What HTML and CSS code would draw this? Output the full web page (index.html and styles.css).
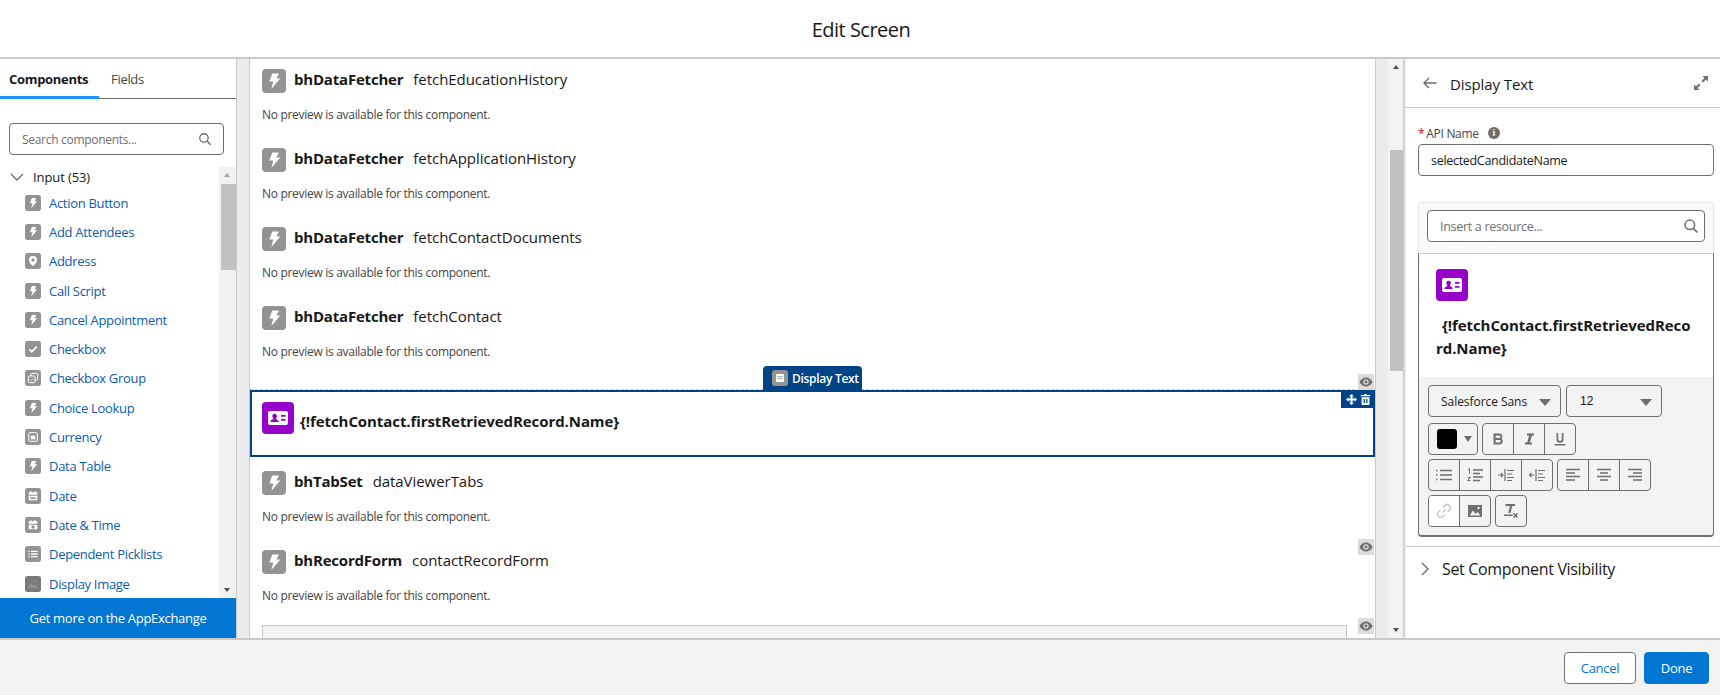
FILE: index.html
```html
<!DOCTYPE html>
<html lang="en">
<head>
<meta charset="utf-8">
<title>Edit Screen</title>
<link rel="stylesheet" href="styles.css">
</head>
<body>
<svg class="defs" width="0" height="0" aria-hidden="true">
  <defs>
    <symbol id="i-bolt" viewBox="0 0 24 24"><rect width="24" height="24" rx="4" fill="#939393"/><path d="M10.300 4.500h6.700l-2.700 5h4l-9 10.500 2-7.500H7.300z" fill="#fff"/></symbol>
    <symbol id="i-pin" viewBox="0 0 24 24"><rect width="24" height="24" rx="4" fill="#939393"/><path fill-rule="evenodd" d="M12 4.500a6 6 0 0 1 6 6c0 3.600-4 7.600-5.300 8.800a1 1 0 0 1-1.400 0C10 18.100 6 14.100 6 10.500a6 6 0 0 1 6-6zm0 3.500a2.500 2.500 0 1 0 0 5 2.500 2.500 0 0 0 0-5z" fill="#fff"/></symbol>
    <symbol id="i-check" viewBox="0 0 24 24"><rect width="24" height="24" rx="4" fill="#939393"/><path d="M6.500 12.500l3.800 3.800 7.200-7.800" fill="none" stroke="#fff" stroke-width="2.400"/></symbol>
    <symbol id="i-group" viewBox="0 0 24 24"><rect width="24" height="24" rx="4" fill="#939393"/><rect x="9" y="5" width="10" height="10" rx="1.500" fill="none" stroke="#fff" stroke-width="1.500"/><rect x="5" y="9" width="10" height="10" rx="1.500" fill="#939393" stroke="#fff" stroke-width="1.500"/><path d="M7.500 14l1.800 1.800 3.200-3.400" fill="none" stroke="#fff"/></symbol>
    <symbol id="i-currency" viewBox="0 0 24 24"><rect width="24" height="24" rx="4" fill="#939393"/><rect x="5.500" y="5.500" width="13" height="13" rx="1.500" fill="none" stroke="#fff" stroke-width="1.500"/><rect x="8.500" y="10" width="7" height="5.500" fill="#fff"/></symbol>
    <symbol id="i-date" viewBox="0 0 24 24"><rect width="24" height="24" rx="4" fill="#939393"/><path d="M5.500 7.500a1 1 0 0 1 1-1h11a1 1 0 0 1 1 1V10h-13z" fill="#fff"/><path d="M5.500 11.500h13v6a1 1 0 0 1-1 1h-11a1 1 0 0 1-1-1z" fill="#fff"/><rect x="8" y="14" width="8" height="2.500" fill="#939393"/><rect x="8" y="4.500" width="1.500" height="3" fill="#fff"/><rect x="14.500" y="4.500" width="1.500" height="3" fill="#fff"/></symbol>
    <symbol id="i-datetime" viewBox="0 0 24 24"><rect width="24" height="24" rx="4" fill="#939393"/><path d="M5.500 7.500a1 1 0 0 1 1-1h11a1 1 0 0 1 1 1V10h-13z" fill="#fff"/><path d="M5.500 11.500h13v6a1 1 0 0 1-1 1h-11a1 1 0 0 1-1-1z" fill="#fff"/><circle cx="12" cy="15" r="2.500" fill="#939393"/><rect x="8" y="4.500" width="1.500" height="3" fill="#fff"/><rect x="14.500" y="4.500" width="1.500" height="3" fill="#fff"/></symbol>
    <symbol id="i-list" viewBox="0 0 24 24"><rect width="24" height="24" rx="4" fill="#939393"/><path d="M5 8h2m2 0h10M5 12h2m2 0h10M5 16h2m2 0h10" fill="none" stroke="#fff" stroke-width="2"/></symbol>
    <symbol id="i-image" viewBox="0 0 24 24"><rect width="24" height="24" rx="4" fill="#7a7a7a"/><path d="M4 18l5-7 3.500 4 2.500-2.500 5 5.500z" fill="#939393"/><circle cx="16" cy="8" r="1.500" fill="#939393"/></symbol>
    <symbol id="i-text" viewBox="0 0 24 24"><rect width="24" height="24" rx="5" fill="#939393"/><rect x="6" y="6" width="12" height="12" rx="1.500" fill="#fff"/><path d="M8 10h8M8 13h8" stroke="#939393" stroke-width="1.300"/></symbol>
    <symbol id="i-contact" viewBox="0 0 32 32"><rect width="32" height="32" rx="4" fill="#9602c7"/><path fill-rule="evenodd" d="M8 9h16a2 2 0 0 1 2 2v10a2 2 0 0 1-2 2H8a2 2 0 0 1-2-2V11a2 2 0 0 1 2-2zm4.500 2.800a2.300 2.300 0 0 0-1.600 3.900c.6.700.5 1.500-.4 1.900-1 .4-1.900.9-1.900 1.600v.8h8v-.8c0-.7-.9-1.200-1.900-1.600-.9-.4-1-1.200-.4-1.900a2.300 2.300 0 0 0-1.800-3.900zm6.500 1.200v1.700h4.500V13zm0 4v1.700h4.500V17z" fill="#fff"/></symbol>
    <symbol id="i-search" viewBox="0 0 16 16"><circle cx="6.800" cy="6.800" r="4.800" fill="none" stroke="#706e6b" stroke-width="1.500"/><path d="M10.300 10.300l4.200 4.200" stroke="#706e6b" stroke-width="1.700"/></symbol>
    <symbol id="i-eye" viewBox="0 0 16 16"><rect width="16" height="16" fill="#dcdcdc"/><path fill-rule="evenodd" d="M8 3.500c3.300 0 5.600 2.500 6.500 4.500-.9 2-3.200 4.500-6.500 4.500S2.400 10 1.500 8C2.400 6 4.700 3.500 8 3.500zm0 1.800a2.700 2.700 0 1 0 0 5.400 2.700 2.700 0 0 0 0-5.400zm0 1.300a1.400 1.400 0 1 1 0 2.800 1.400 1.400 0 0 1 0-2.800z" fill="#706e6b"/></symbol>
  </defs>
</svg>

<header class="top">Edit Screen</header>

<main class="main">
  <aside class="left">
    <nav class="tabs">
      <span class="tab tab-on">Components</span>
      <span class="tab">Fields</span>
    </nav>
    <div class="search">
      <span class="search-ph">Search components...</span>
      <svg class="search-ic"><use href="#i-search"/></svg>
    </div>
    <div class="list-wrap">
      <div class="list">
        <div class="list-head">
          <svg class="chev" viewBox="0 0 14 8"><path d="M1 1l6 6 6-6" fill="none" stroke="#706e6b" stroke-width="1.400"/></svg>
          <span>Input (53)</span>
        </div>
        <a class="row"><svg class="row-ic"><use href="#i-bolt"/></svg>Action Button</a>
        <a class="row"><svg class="row-ic"><use href="#i-bolt"/></svg>Add Attendees</a>
        <a class="row"><svg class="row-ic"><use href="#i-pin"/></svg>Address</a>
        <a class="row"><svg class="row-ic"><use href="#i-bolt"/></svg>Call Script</a>
        <a class="row"><svg class="row-ic"><use href="#i-bolt"/></svg>Cancel Appointment</a>
        <a class="row"><svg class="row-ic"><use href="#i-check"/></svg>Checkbox</a>
        <a class="row"><svg class="row-ic"><use href="#i-group"/></svg>Checkbox Group</a>
        <a class="row"><svg class="row-ic"><use href="#i-bolt"/></svg>Choice Lookup</a>
        <a class="row"><svg class="row-ic"><use href="#i-currency"/></svg>Currency</a>
        <a class="row"><svg class="row-ic"><use href="#i-bolt"/></svg>Data Table</a>
        <a class="row"><svg class="row-ic"><use href="#i-date"/></svg>Date</a>
        <a class="row"><svg class="row-ic"><use href="#i-datetime"/></svg>Date &amp; Time</a>
        <a class="row"><svg class="row-ic"><use href="#i-list"/></svg>Dependent Picklists</a>
        <a class="row"><svg class="row-ic"><use href="#i-image"/></svg>Display Image</a>
      </div>
      <div class="sbar sbar-list">
        <i class="arrow-up"></i>
        <i class="thumb thumb-list"></i>
        <i class="arrow-down"></i>
      </div>
    </div>
    <div class="appx">Get more on the AppExchange</div>
  </aside>

  <div class="gutter"></div>

  <section class="canvas">
    <div class="item">
      <div class="item-title"><svg class="item-ic"><use href="#i-bolt"/></svg><b>bhDataFetcher</b><span>fetchEducationHistory</span></div>
      <p class="nopreview">No preview is available for this component.</p>
    </div>
    <div class="item">
      <div class="item-title"><svg class="item-ic"><use href="#i-bolt"/></svg><b>bhDataFetcher</b><span>fetchApplicationHistory</span></div>
      <p class="nopreview">No preview is available for this component.</p>
    </div>
    <div class="item">
      <div class="item-title"><svg class="item-ic"><use href="#i-bolt"/></svg><b>bhDataFetcher</b><span>fetchContactDocuments</span></div>
      <p class="nopreview">No preview is available for this component.</p>
    </div>
    <div class="item">
      <div class="item-title"><svg class="item-ic"><use href="#i-bolt"/></svg><b>bhDataFetcher</b><span>fetchContact</span></div>
      <p class="nopreview">No preview is available for this component.</p>
    </div>
    <div class="selected">
      <div class="badge"><svg class="badge-ic"><use href="#i-text"/></svg>Display Text</div>
      <svg class="eye eye-sel"><use href="#i-eye"/></svg>
      <div class="sel-tools">
        <svg class="tool-ic" viewBox="0 0 14 14"><path d="M7 0l3 3H8.300v2.700H11V4l3 3-3 3V8.300H8.300V11H10l-3 3-3-3h1.700V8.300H3V10L0 7l3-3v1.700h2.700V3H4z" fill="#fff"/></svg>
        <svg class="tool-ic" viewBox="0 0 14 14"><path d="M5.500 0h3v1.200H13v1.800H1V1.200h4.500zM2 4h10v9a1 1 0 0 1-1 1H3a1 1 0 0 1-1-1zm2.500 2.500v5h1.700v-5zm3.300 0v5h1.700v-5z" fill="#fff"/></svg>
      </div>
      <svg class="sel-ic"><use href="#i-contact"/></svg>
      <b class="sel-text">{!fetchContact.firstRetrievedRecord.Name}</b>
    </div>
    <div class="item item-after">
      <div class="item-title"><svg class="item-ic"><use href="#i-bolt"/></svg><b>bhTabSet</b><span>dataViewerTabs</span></div>
      <p class="nopreview">No preview is available for this component.</p>
    </div>
    <div class="item">
      <svg class="eye eye-item"><use href="#i-eye"/></svg>
      <div class="item-title"><svg class="item-ic"><use href="#i-bolt"/></svg><b>bhRecordForm</b><span>contactRecordForm</span></div>
      <p class="nopreview">No preview is available for this component.</p>
    </div>
    <div class="form-box">
      <svg class="eye eye-box"><use href="#i-eye"/></svg>
    </div>
  </section>

  <div class="sbar-wrap">
    <div class="gutter2"></div>
    <div class="sbar sbar-canvas">
      <i class="arrow-up"></i>
      <i class="thumb thumb-canvas"></i>
      <i class="arrow-down"></i>
    </div>
  </div>

  <aside class="right">
    <div class="right-head">
      <svg class="back" viewBox="0 0 14 12"><path d="M13.500 6H1.500M6 1L1 6l5 5" fill="none" stroke="#706e6b" stroke-width="1.400"/></svg>
      <span class="right-title">Display Text</span>
      <svg class="expand" viewBox="0 0 14 14"><path d="M8.500 0H14v5.500l-2-2-3 3-1.500-1.500 3-3zM5.500 14H0V8.500l2 2 3-3L6.500 9l-3 3z" fill="#706e6b"/></svg>
    </div>
    <div class="right-body">
      <label class="api-label"><span class="req">*</span>API Name<i class="info">i</i></label>
      <div class="input">selectedCandidateName</div>
      <div class="editor">
        <div class="editor-top">
          <div class="res-search">
            <span class="res-ph">Insert a resource...</span>
            <svg class="search-ic"><use href="#i-search"/></svg>
          </div>
        </div>
        <div class="editor-content">
          <svg class="sel-ic sel-ic-ed"><use href="#i-contact"/></svg>
          <p class="ed-text"><span class="ed-lead"></span><b>{!fetchContact.firstRetrievedRecord.Name}</b></p>
        </div>
        <div class="toolbar">
          <div class="tb-row">
            <div class="select sel-font">Salesforce Sans<i class="caret"></i></div>
            <div class="select sel-size">12<i class="caret"></i></div>
          </div>
          <div class="tb-row tb-row-2">
            <div class="btn color"><i class="swatch"></i><i class="caret caret-sm"></i></div>
            <div class="grp">
              <span class="btn-g"><svg class="tb-ic" viewBox="0 0 14 14"><path fill-rule="evenodd" d="M2.500 1.500h6a3 3 0 0 1 2 5.200 3.200 3.200 0 0 1-1.800 5.800H2.500zM4.600 3.500v2.600h3.700a1.300 1.300 0 0 0 0-2.600zm0 4.500v2.500h3.900a1.250 1.250 0 0 0 0-2.500z" fill="#706e6b"/></svg></span>
              <span class="btn-g"><svg class="tb-ic" viewBox="0 0 14 14"><path d="M5 1.500h7v1.900H9.900L7.900 10.600h2.100v1.900H3v-1.900h2.200l2-7.200H5z" fill="#706e6b"/></svg></span>
              <span class="btn-g"><svg class="tb-ic" viewBox="0 0 14 14"><path d="M3.500 1h1.700v6.300a1.800 1.800 0 0 0 3.600 0V1h1.700v6.300a3.500 3.500 0 0 1-7 0zM1.500 12h11v1.500h-11z" fill="#706e6b"/></svg></span>
            </div>
          </div>
          <div class="tb-row">
            <div class="grp">
              <span class="btn-g"><svg class="tb-ic tb-ic-w" viewBox="0 0 16 14"><path d="M0 2.500h1.500M4 2.500h12M0 7h1.500M4 7h12M0 11.500h1.500M4 11.500h12" stroke="#706e6b" stroke-width="1.500"/></svg></span>
              <span class="btn-g"><svg class="tb-ic tb-ic-w" viewBox="0 0 16 14"><path d="M6 2h10M6 5.500h7M6 9h10M6 12.500h7" stroke="#706e6b" stroke-width="1.400"/><path d="M1 1.500l1.500-.8V6M.5 9.500h3l-3 3h3" fill="none" stroke="#706e6b"/></svg></span>
              <span class="btn-g"><svg class="tb-ic tb-ic-w" viewBox="0 0 16 14"><path d="M0 7h4.500M3 5l2 2-2 2M7 1v12" fill="none" stroke="#706e6b" stroke-width="1.200"/><path d="M9 2.500h7M9 6h5M9 9.500h7M9 12.500h5" stroke="#706e6b" stroke-width="1.200"/></svg></span>
              <span class="btn-g"><svg class="tb-ic tb-ic-w" viewBox="0 0 16 14"><path d="M5 7H.5M2.500 5l-2 2 2 2M7 1v12" fill="none" stroke="#706e6b" stroke-width="1.200"/><path d="M9 2.500h7M9 6h5M9 9.500h7M9 12.500h5" stroke="#706e6b" stroke-width="1.200"/></svg></span>
            </div>
            <div class="grp">
              <span class="btn-g"><svg class="tb-ic" viewBox="0 0 14 14"><path d="M0 1.500h14M0 5h9M0 8.500h14M0 12h9" stroke="#706e6b" stroke-width="1.500"/></svg></span>
              <span class="btn-g"><svg class="tb-ic" viewBox="0 0 14 14"><path d="M0 1.500h14M3 5h8M0 8.500h14M3 12h8" stroke="#706e6b" stroke-width="1.500"/></svg></span>
              <span class="btn-g"><svg class="tb-ic" viewBox="0 0 14 14"><path d="M0 1.500h14M5 5h9M0 8.500h14M5 12h9" stroke="#706e6b" stroke-width="1.500"/></svg></span>
            </div>
          </div>
          <div class="tb-row">
            <div class="grp">
              <span class="btn-g btn-off"><svg class="tb-ic tb-ic-lg" viewBox="0 0 16 16"><path d="M6.500 9.500l3-3M7 4.500l2-2a3 3 0 0 1 4.500 4.500l-2 2M9 11.500l-2 2A3 3 0 0 1 2.500 9l2-2" fill="none" stroke="#c9c9c9" stroke-width="1.500"/></svg></span>
              <span class="btn-g"><svg class="tb-ic tb-ic-lg" viewBox="0 0 16 16"><path fill-rule="evenodd" d="M1 2h14v12H1zm10.500 1.800a1.200 1.200 0 1 0 0 2.400 1.200 1.200 0 0 0 0-2.400zM2.500 12.500h11l-3-3.500-2 2-2.500-3.500z" fill="#706e6b"/></svg></span>
            </div>
            <div class="grp">
              <span class="btn-g"><svg class="tb-ic tb-ic-lg" viewBox="0 0 16 16"><path d="M2.500 1h9.500v2H9.200L7.500 10H5.300L7 3H2.500zM1 11.500h8.500v1.500H1z" fill="#706e6b"/><path d="M10.500 10.500l4 4M14.500 10.500l-4 4" stroke="#706e6b" stroke-width="1.600"/></svg></span>
            </div>
          </div>
        </div>
      </div>
    </div>
    <div class="section">
      <svg class="sec-chev" viewBox="0 0 8 14"><path d="M1 1l6 6-6 6" fill="none" stroke="#706e6b" stroke-width="1.400"/></svg>
      <span>Set Component Visibility</span>
    </div>
  </aside>
</main>

<footer class="foot">
  <button class="btn-cancel">Cancel</button>
  <button class="btn-done">Done</button>
</footer>
</body>
</html>
```

FILE: styles.css
```css
* { box-sizing: border-box; }
html, body { margin: 0; padding: 0; }
body {
  width: 1720px;
  height: 695px;
  overflow: hidden;
  display: flex;
  flex-direction: column;
  font-family: "Open Sans", "Noto Sans", sans-serif;
  font-size: 12px;
  letter-spacing: -0.3px;
  color: #181818;
  background: #fff;
}
.defs { position: absolute; }
svg { display: block; flex: none; }

.top {
  height: 59px;
  flex: none;
  border-bottom: 2px solid #c9c9c9;
  display: flex;
  align-items: center;
  justify-content: center;
  padding: 2px 0 0 2px;
  font-size: 20px;
  letter-spacing: -0.5px;
}

.main { flex: 1; display: flex; min-height: 0; }

/* left */
.left {
  width: 237px;
  flex: none;
  border-right: 1px solid #c9c9c9;
  display: flex;
  flex-direction: column;
}
.tabs {
  height: 40px;
  flex: none;
  display: flex;
  border-bottom: 1px solid #706e6b;
  font-size: 13px;
}
.tab { padding: 11px 8px 0 12px; color: #444; line-height: 18px; }
.tab-on {
  width: 99px;
  padding-left: 9px;
  font-weight: 700;
  color: #181818;
  border-bottom: 3px solid #1b96ff;
  height: 40px;
}
.search {
  margin: 24px 12px 0 9px;
  height: 32px;
  flex: none;
  border: 1px solid #706e6b;
  border-radius: 4px;
  display: flex;
  align-items: center;
  justify-content: space-between;
  padding: 0 11px 0 12px;
}
.search-ph { color: #706e6b; }
.search-ic { width: 14px; height: 14px; }
.list-wrap { flex: 1; display: flex; margin-top: 12px; min-height: 0; }
.list { flex: 1; min-width: 0; overflow: hidden; }
.list-head {
  height: 19px;
  margin-bottom: 2px;
  display: flex;
  align-items: center;
  gap: 9px;
  padding-left: 10px;
  font-size: 13px;
  letter-spacing: -0.1px;
  color: #181818;
}
.chev { width: 14px; height: 8px; }
.row {
  height: 29.3px;
  display: flex;
  align-items: center;
  gap: 8px;
  padding-left: 25px;
  font-size: 13px;
  color: #0b5cab;
}
.row-ic { width: 16px; height: 16px; }
.appx {
  height: 40px;
  flex: none;
  background: #0176d3;
  color: #fff;
  font-size: 13px;
  display: flex;
  align-items: center;
  justify-content: center;
}

/* scrollbars */
.sbar { position: relative; background: #f1f1f1; flex: none; display: flex; flex-direction: column; }
.sbar-list { width: 17px; }
.thumb { display: block; background: #c1c1c1; }
.thumb-list { height: 86px; margin-left: 2px; }
.thumb-canvas { height: 221px; margin: 74px 0 0 2px; }
.arrow-up, .arrow-down {
  display: block;
  width: 0;
  height: 0;
  border-left: 3.500px solid transparent;
  border-right: 3.500px solid transparent;
  margin-left: 5px;
}
.arrow-up { border-bottom: 4px solid #505050; margin-top: 6px; margin-bottom: 7px; }
.sbar-list .arrow-up { border-bottom-color: #a3a3a3; }
.arrow-down { border-top: 4px solid #505050; position: absolute; bottom: 6px; left: 0; }

.gutter {
  width: 13px;
  flex: none;
  background: #ebebeb;
  border-right: 1px solid #c9c9c9;
}

/* canvas */
.canvas {
  width: 1125px;
  flex: none;
  position: relative;
  overflow: hidden;
  background: #fff;
}
.item { height: 79px; padding: 10px 12px 0; position: relative; }
.item-after { margin-top: 4px; }
.item-title {
  display: flex;
  align-items: flex-start;
  height: 24px;
  font-size: 15px;
  line-height: 20px;
}
.item-ic { width: 24px; height: 24px; margin-right: 8px; }
.item-title b { margin-right: 10px; letter-spacing: -0.2px; }
.item-title span { letter-spacing: -0.05px; }
.nopreview { margin: 14px 0 0; color: #444; font-size: 12px; line-height: 16px; }
.selected {
  position: relative;
  height: 67px;
  margin-top: 15px;
  border: 2px solid #014486;
  display: flex;
  align-items: flex-start;
  padding: 10px;
}
.selected::before {
  content: "";
  position: absolute;
  left: -2px;
  right: -2px;
  top: -3px;
  border-top: 1px dashed #c9c9c9;
}
.sel-ic { width: 32px; height: 32px; }
.sel-text { margin: 7px 0 0 6px; font-size: 15px; letter-spacing: -0.08px; line-height: 24px; }
.badge {
  position: absolute;
  top: -26px;
  left: 511px;
  width: 99px;
  height: 24px;
  background: #014486;
  border-radius: 4px 4px 0 0;
  color: #fff;
  font-weight: 600;
  display: flex;
  align-items: center;
  gap: 4px;
  padding-left: 9px;
}
.badge-ic { width: 16px; height: 16px; }
.eye { position: absolute; width: 16px; height: 16px; }
.eye-sel { right: -1px; top: -18px; }
.eye-item { right: 1px; top: -1px; }
.eye-box { right: -28px; top: -8px; }
.sel-tools {
  position: absolute;
  right: -2px;
  top: -2px;
  width: 34px;
  height: 18px;
  background: #014486;
  display: flex;
  align-items: center;
  justify-content: center;
  gap: 3px;
}
.tool-ic { width: 11px; height: 11px; }
.form-box {
  position: relative;
  height: 40px;
  margin: 6px 0 0 12px;
  width: 1085px;
  background: #f3f3f3;
  border: 1px solid #c9c9c9;
}

/* canvas scroll */
.sbar-wrap { width: 31px; flex: none; display: flex; }
.gutter2 {
  width: 13px;
  background: #ebebeb;
  border-left: 1px solid #c9c9c9;
}
.sbar-canvas {
  width: 15px;
  background: #f3f3f3;
  box-shadow: 2px 0 2px #c9c9c9;
}

/* right */
.right { flex: 1; min-width: 0; display: flex; flex-direction: column; background: #fff; position: relative; }
.right-head {
  height: 49px;
  flex: none;
  display: flex;
  align-items: center;
  padding: 0 12px 0 17px;
  border-bottom: 1px solid #c9c9c9;
}
.back { width: 14px; height: 12px; margin-right: 13px; }
.right-title { flex: 1; padding-top: 2px; font-size: 15px; letter-spacing: -0.1px; }
.expand { width: 14px; height: 14px; }
.right-body { padding: 16px 6px 0 12px; }
.api-label { display: flex; align-items: center; height: 18px; color: #444; }
.req { color: #ea001e; margin-right: 2px; }
.info {
  width: 12px;
  height: 12px;
  margin-left: 9px;
  border-radius: 50%;
  background: #706e6b;
  color: #fff;
  font-size: 9px;
  font-weight: 700;
  font-style: normal;
  line-height: 12px;
  text-align: center;
}
.input {
  height: 32px;
  margin-top: 2px;
  border: 1px solid #706e6b;
  border-radius: 4px;
  display: flex;
  align-items: center;
  padding-left: 12px;
  font-size: 12.500px;
}
.editor { margin-top: 26px; }
.editor-top {
  height: 51px;
  background: #fafaf9;
  border: 1px solid #e5e5e5;
  border-bottom: 0;
  border-radius: 4px 4px 0 0;
  padding: 7px 8px 0;
}
.res-search {
  height: 32px;
  border: 1px solid #706e6b;
  border-radius: 4px;
  background: #fff;
  display: flex;
  align-items: center;
  justify-content: space-between;
  padding: 0 5px 0 12px;
}
.res-ph { color: #706e6b; font-size: 12.500px; }
.res-search .search-ic { width: 16px; height: 16px; }
.editor-content {
  height: 124px;
  border: 1px solid #706e6b;
  border-top-color: #c9c9c9;
  border-bottom: 0;
  padding: 15px 17px 0 17px;
}
.sel-ic-ed { width: 32px; height: 32px; }
.ed-text {
  margin: 13px 0 0;
  font-size: 15px;
  letter-spacing: -0.08px;
  line-height: 23px;
  word-break: break-all;
}
.ed-lead { display: inline-block; width: 6px; }
.toolbar {
  height: 160px;
  background: #f3f3f3;
  border: 1px solid #706e6b;
  border-top: 0;
  border-bottom-width: 2px;
  border-radius: 0 0 4px 4px;
  padding: 8px 9px 0;
  display: flex;
  flex-direction: column;
  gap: 4px;
}
.tb-row { display: flex; gap: 4px; height: 32px; flex: none; }
.tb-row-2 { margin-top: 2px; }
.select {
  position: relative;
  height: 32px;
  background: #f3f3f3;
  border: 1px solid #706e6b;
  border-radius: 4px;
  display: flex;
  align-items: center;
  color: #181818;
  letter-spacing: -0.05px;
  padding-left: 12px;
}
.sel-font { width: 133px; }
.sel-size { width: 96px; margin-left: 1px; font-family: "Liberation Sans", sans-serif; letter-spacing: 0; padding-left: 13px; }
.caret {
  position: absolute;
  right: 9px;
  top: 13px;
  width: 0;
  height: 0;
  border-left: 6px solid transparent;
  border-right: 6px solid transparent;
  border-top: 7px solid #706e6b;
}
.btn {
  position: relative;
  height: 32px;
  width: 50px;
  border: 1px solid #706e6b;
  border-radius: 4px;
}
.swatch {
  position: absolute;
  left: 8px;
  top: 5px;
  width: 20px;
  height: 20px;
  border-radius: 3px;
  background: #000;
}
.caret-sm {
  right: 5px;
  top: 12px;
  border-left-width: 4.500px;
  border-right-width: 4.500px;
  border-top-width: 6px;
}
.grp {
  display: flex;
  height: 32px;
  border: 1px solid #706e6b;
  border-radius: 4px;
}
.btn-g {
  width: 30px;
  height: 30px;
  display: flex;
  align-items: center;
  justify-content: center;
}
.btn-g + .btn-g { width: 31px; border-left: 1px solid #706e6b; }
.btn-off {
  background: #fff;
  border-radius: 3px 0 0 3px;
}
.tb-ic { width: 14px; height: 14px; }
.tb-ic-w { width: 16px; height: 14px; }
.tb-ic-lg { width: 16px; height: 16px; }
.section {
  margin-top: 9px;
  border-top: 1px solid #c9c9c9;
  height: 44px;
  display: flex;
  align-items: center;
  padding-left: 15px;
  gap: 13px;
  font-size: 16px;
  letter-spacing: -0.33px;
}
.sec-chev { width: 8px; height: 14px; }

/* footer */
.foot {
  height: 57px;
  flex: none;
  background: #f3f3f3;
  border-top: 2px solid #c9c9c9;
  display: flex;
  justify-content: flex-end;
  align-items: flex-start;
  gap: 8px;
  padding: 12px 11px 0 0;
}
.foot button {
  height: 32px;
  border-radius: 4px;
  font-family: inherit;
  font-size: 13px;
  letter-spacing: -0.3px;
  padding: 0;
}
.btn-cancel { width: 72px; background: #fff; border: 1px solid #706e6b; color: #0176d3; }
.btn-done { width: 65px; background: #0176d3; border: 1px solid #0176d3; color: #fff; }
```
